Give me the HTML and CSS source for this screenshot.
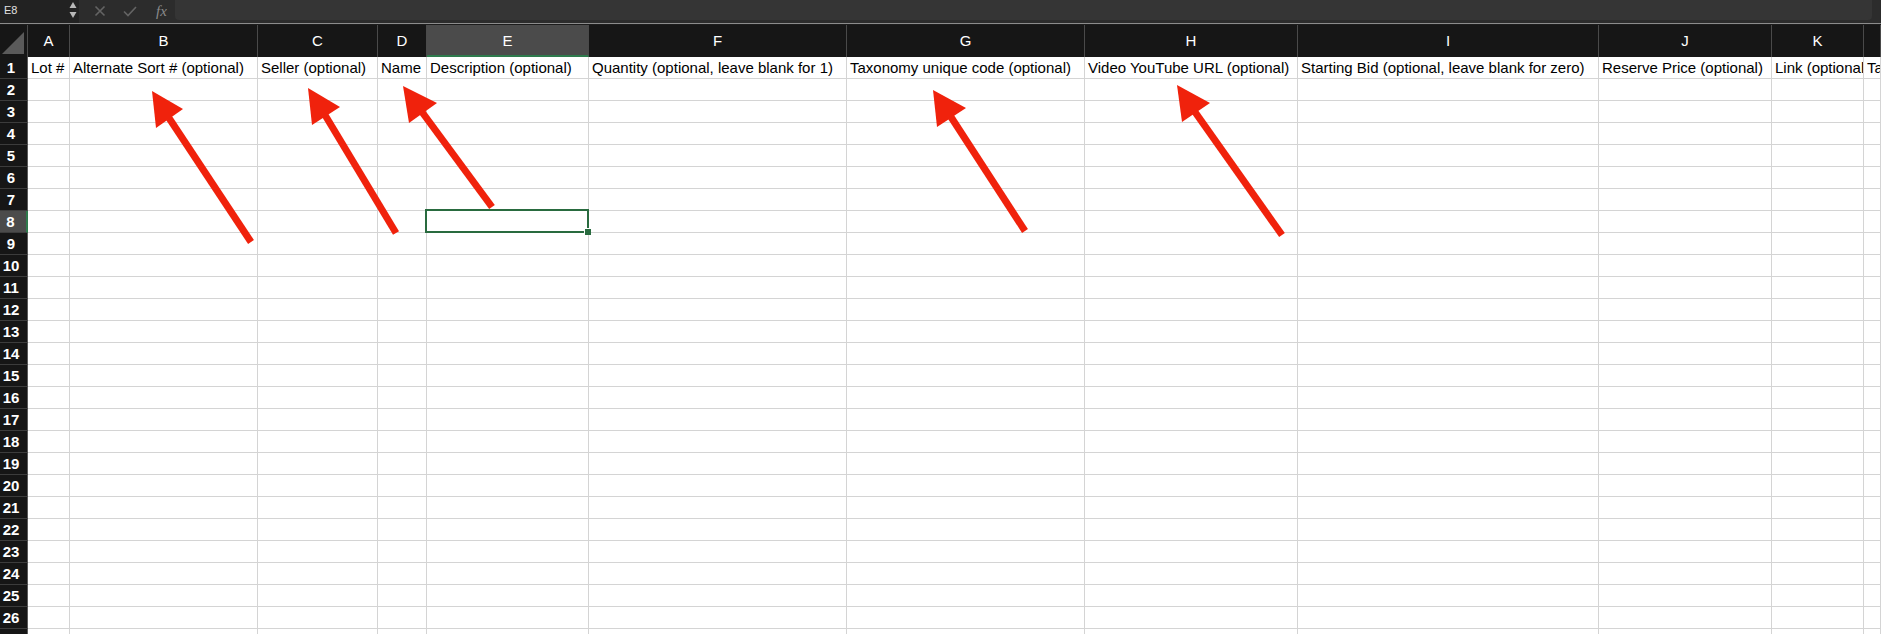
FILE: index.html
```html
<!DOCTYPE html>
<html>
<head>
<meta charset="utf-8">
<link rel="stylesheet" href="styles.css">
</head>
<body>
<div class="topbar">
  <div class="namebox">
    <span class="ref">E8</span>
    <svg class="spin" width="8" height="18" viewBox="0 0 8 18"><polygon points="4,1 7.5,7 0.5,7" fill="#b8b8b8"/><polygon points="0.5,11 7.5,11 4,17" fill="#b8b8b8"/></svg>
  </div>
  <div class="fbtns">
    <svg width="12" height="12" viewBox="0 0 12 12"><path d="M1.5 1.5L10.5 10.5M10.5 1.5L1.5 10.5" stroke="#646464" stroke-width="1.6"/></svg>
    <svg width="14" height="11" viewBox="0 0 14 11"><path d="M1 5.5L5 9.5L13 1" stroke="#646464" stroke-width="1.6" fill="none"/></svg>
    <span class="fx">fx</span>
  </div>
  <div class="finput"></div>
</div>
<div class="topline"></div>
<div class="sheet">
  <div class="row hdr"><div class="corner"><svg width="24" height="24" viewBox="0 0 24 24"><polygon points="23,1 23,23 1,23" fill="#5a5a5a"/></svg></div><div class="h">A</div><div class="h">B</div><div class="h">C</div><div class="h">D</div><div class="h sel">E</div><div class="h">F</div><div class="h">G</div><div class="h">H</div><div class="h">I</div><div class="h">J</div><div class="h">K</div><div class="h"></div></div>
  <div class="row"><div class="rh">1</div><div class="c">Lot #</div><div class="c">Alternate Sort # (optional)</div><div class="c">Seller (optional)</div><div class="c">Name</div><div class="c">Description (optional)</div><div class="c">Quantity (optional, leave blank for 1)</div><div class="c">Taxonomy unique code (optional)</div><div class="c">Video YouTube URL (optional)</div><div class="c">Starting Bid (optional, leave blank for zero)</div><div class="c">Reserve Price (optional)</div><div class="c">Link (optional)</div><div class="c">Tags (optional)</div></div>
  <div class="row"><div class="rh">2</div><div class="c"></div><div class="c"></div><div class="c"></div><div class="c"></div><div class="c"></div><div class="c"></div><div class="c"></div><div class="c"></div><div class="c"></div><div class="c"></div><div class="c"></div><div class="c"></div></div>
  <div class="row"><div class="rh">3</div><div class="c"></div><div class="c"></div><div class="c"></div><div class="c"></div><div class="c"></div><div class="c"></div><div class="c"></div><div class="c"></div><div class="c"></div><div class="c"></div><div class="c"></div><div class="c"></div></div>
  <div class="row"><div class="rh">4</div><div class="c"></div><div class="c"></div><div class="c"></div><div class="c"></div><div class="c"></div><div class="c"></div><div class="c"></div><div class="c"></div><div class="c"></div><div class="c"></div><div class="c"></div><div class="c"></div></div>
  <div class="row"><div class="rh">5</div><div class="c"></div><div class="c"></div><div class="c"></div><div class="c"></div><div class="c"></div><div class="c"></div><div class="c"></div><div class="c"></div><div class="c"></div><div class="c"></div><div class="c"></div><div class="c"></div></div>
  <div class="row"><div class="rh">6</div><div class="c"></div><div class="c"></div><div class="c"></div><div class="c"></div><div class="c"></div><div class="c"></div><div class="c"></div><div class="c"></div><div class="c"></div><div class="c"></div><div class="c"></div><div class="c"></div></div>
  <div class="row"><div class="rh">7</div><div class="c"></div><div class="c"></div><div class="c"></div><div class="c"></div><div class="c"></div><div class="c"></div><div class="c"></div><div class="c"></div><div class="c"></div><div class="c"></div><div class="c"></div><div class="c"></div></div>
  <div class="row"><div class="rh sel">8</div><div class="c"></div><div class="c"></div><div class="c"></div><div class="c"></div><div class="c active"><span class="outline"><span class="handle"></span></span></div><div class="c"></div><div class="c"></div><div class="c"></div><div class="c"></div><div class="c"></div><div class="c"></div><div class="c"></div></div>
  <div class="row"><div class="rh">9</div><div class="c"></div><div class="c"></div><div class="c"></div><div class="c"></div><div class="c"></div><div class="c"></div><div class="c"></div><div class="c"></div><div class="c"></div><div class="c"></div><div class="c"></div><div class="c"></div></div>
  <div class="row"><div class="rh">10</div><div class="c"></div><div class="c"></div><div class="c"></div><div class="c"></div><div class="c"></div><div class="c"></div><div class="c"></div><div class="c"></div><div class="c"></div><div class="c"></div><div class="c"></div><div class="c"></div></div>
  <div class="row"><div class="rh">11</div><div class="c"></div><div class="c"></div><div class="c"></div><div class="c"></div><div class="c"></div><div class="c"></div><div class="c"></div><div class="c"></div><div class="c"></div><div class="c"></div><div class="c"></div><div class="c"></div></div>
  <div class="row"><div class="rh">12</div><div class="c"></div><div class="c"></div><div class="c"></div><div class="c"></div><div class="c"></div><div class="c"></div><div class="c"></div><div class="c"></div><div class="c"></div><div class="c"></div><div class="c"></div><div class="c"></div></div>
  <div class="row"><div class="rh">13</div><div class="c"></div><div class="c"></div><div class="c"></div><div class="c"></div><div class="c"></div><div class="c"></div><div class="c"></div><div class="c"></div><div class="c"></div><div class="c"></div><div class="c"></div><div class="c"></div></div>
  <div class="row"><div class="rh">14</div><div class="c"></div><div class="c"></div><div class="c"></div><div class="c"></div><div class="c"></div><div class="c"></div><div class="c"></div><div class="c"></div><div class="c"></div><div class="c"></div><div class="c"></div><div class="c"></div></div>
  <div class="row"><div class="rh">15</div><div class="c"></div><div class="c"></div><div class="c"></div><div class="c"></div><div class="c"></div><div class="c"></div><div class="c"></div><div class="c"></div><div class="c"></div><div class="c"></div><div class="c"></div><div class="c"></div></div>
  <div class="row"><div class="rh">16</div><div class="c"></div><div class="c"></div><div class="c"></div><div class="c"></div><div class="c"></div><div class="c"></div><div class="c"></div><div class="c"></div><div class="c"></div><div class="c"></div><div class="c"></div><div class="c"></div></div>
  <div class="row"><div class="rh">17</div><div class="c"></div><div class="c"></div><div class="c"></div><div class="c"></div><div class="c"></div><div class="c"></div><div class="c"></div><div class="c"></div><div class="c"></div><div class="c"></div><div class="c"></div><div class="c"></div></div>
  <div class="row"><div class="rh">18</div><div class="c"></div><div class="c"></div><div class="c"></div><div class="c"></div><div class="c"></div><div class="c"></div><div class="c"></div><div class="c"></div><div class="c"></div><div class="c"></div><div class="c"></div><div class="c"></div></div>
  <div class="row"><div class="rh">19</div><div class="c"></div><div class="c"></div><div class="c"></div><div class="c"></div><div class="c"></div><div class="c"></div><div class="c"></div><div class="c"></div><div class="c"></div><div class="c"></div><div class="c"></div><div class="c"></div></div>
  <div class="row"><div class="rh">20</div><div class="c"></div><div class="c"></div><div class="c"></div><div class="c"></div><div class="c"></div><div class="c"></div><div class="c"></div><div class="c"></div><div class="c"></div><div class="c"></div><div class="c"></div><div class="c"></div></div>
  <div class="row"><div class="rh">21</div><div class="c"></div><div class="c"></div><div class="c"></div><div class="c"></div><div class="c"></div><div class="c"></div><div class="c"></div><div class="c"></div><div class="c"></div><div class="c"></div><div class="c"></div><div class="c"></div></div>
  <div class="row"><div class="rh">22</div><div class="c"></div><div class="c"></div><div class="c"></div><div class="c"></div><div class="c"></div><div class="c"></div><div class="c"></div><div class="c"></div><div class="c"></div><div class="c"></div><div class="c"></div><div class="c"></div></div>
  <div class="row"><div class="rh">23</div><div class="c"></div><div class="c"></div><div class="c"></div><div class="c"></div><div class="c"></div><div class="c"></div><div class="c"></div><div class="c"></div><div class="c"></div><div class="c"></div><div class="c"></div><div class="c"></div></div>
  <div class="row"><div class="rh">24</div><div class="c"></div><div class="c"></div><div class="c"></div><div class="c"></div><div class="c"></div><div class="c"></div><div class="c"></div><div class="c"></div><div class="c"></div><div class="c"></div><div class="c"></div><div class="c"></div></div>
  <div class="row"><div class="rh">25</div><div class="c"></div><div class="c"></div><div class="c"></div><div class="c"></div><div class="c"></div><div class="c"></div><div class="c"></div><div class="c"></div><div class="c"></div><div class="c"></div><div class="c"></div><div class="c"></div></div>
  <div class="row"><div class="rh">26</div><div class="c"></div><div class="c"></div><div class="c"></div><div class="c"></div><div class="c"></div><div class="c"></div><div class="c"></div><div class="c"></div><div class="c"></div><div class="c"></div><div class="c"></div><div class="c"></div></div>
  <div class="row"><div class="rh">27</div><div class="c"></div><div class="c"></div><div class="c"></div><div class="c"></div><div class="c"></div><div class="c"></div><div class="c"></div><div class="c"></div><div class="c"></div><div class="c"></div><div class="c"></div><div class="c"></div></div>
</div>
<svg class="arrows" width="1881" height="634" viewBox="0 0 1881 634">
  <g fill="#f0220c" stroke="#f0220c">
    <polygon points="152,91 183,109 156,128" stroke="none"/>
    <line x1="169" y1="118" x2="251" y2="242" stroke-width="7"/>
    <polygon points="308,88 340,107 312,125" stroke="none"/>
    <line x1="325" y1="115" x2="396" y2="233" stroke-width="7"/>
    <polygon points="403,86 437,103 409,123" stroke="none"/>
    <line x1="422" y1="112" x2="492" y2="207" stroke-width="7"/>
    <polygon points="933,90 966,108 937,127" stroke="none"/>
    <line x1="951" y1="117" x2="1025" y2="231" stroke-width="7"/>
    <polygon points="1177,85 1210,103 1182,122" stroke="none"/>
    <line x1="1195" y1="112" x2="1282" y2="235" stroke-width="7"/>
  </g>
</svg>
</body>
</html>
```
FILE: styles.css
```css
html, body {
  margin: 0;
  padding: 0;
}
body {
  width: 1881px;
  height: 634px;
  overflow: hidden;
  background: #ffffff;
  font-family: "Liberation Sans", Arial, sans-serif;
  position: relative;
}
.topbar {
  display: flex;
  height: 23px;
  background: #2c2c2c;
}
.namebox {
  width: 79px;
  background: #222222;
  display: flex;
  align-items: flex-start;
  justify-content: space-between;
  box-sizing: border-box;
  padding: 0 2px 0 4px;
}
.ref {
  color: #e0e0e0;
  font-size: 11px;
  line-height: 20px;
}
.spin {
  margin-top: 1px;
}
.fbtns {
  width: 96px;
  display: flex;
  align-items: center;
  padding-left: 15px;
  box-sizing: border-box;
  gap: 16px;
  height: 22px;
}
.fbtns svg:nth-child(2) {
  margin-left: 1px;
}
.fx {
  font-family: "Liberation Serif", serif;
  font-style: italic;
  font-size: 15px;
  color: #8a8a8a;
  margin-left: 3px;
}
.finput {
  flex: 1;
  height: 20px;
  background: #353535;
  border-radius: 0 0 4px 4px;
  margin-right: 9px;
}
.topline {
  height: 1px;
  background: #8c8c8c;
  border-bottom: 1px solid #1c1c1c;
}
.sheet {
  position: relative;
}
.row {
  display: grid;
  grid-template-columns: 28px 42px 188px 120px 49px 162px 258px 238px 213px 301px 173px 92px minmax(0, 1fr);
  height: 22px;
}
.row.hdr {
  height: 32px;
  background: #161616;
}
.corner {
  display: flex;
  align-items: flex-end;
  justify-content: flex-end;
  border-right: 1px solid #4a4a4a;
  padding: 0 2px 2px 0;
}
.h {
  color: #ffffff;
  font-size: 15px;
  line-height: 31px;
  text-align: center;
  border-right: 1px solid #4a4a4a;
  box-sizing: border-box;
}
.h.sel {
  background: #4b4b4b;
  border-bottom: 2px solid #2e7a4c;
  line-height: 29px;
  padding-top: 1px;
}
.rh {
  background: #161616;
  color: #ffffff;
  font-weight: bold;
  font-size: 15px;
  line-height: 21px;
  text-align: center;
  padding-right: 5px;
  border-bottom: 1px solid #3c3c3c;
  border-right: 1px solid #5a5a5a;
  box-sizing: border-box;
}
.rh.sel {
  background: #4b4b4b;
  border-right: 2px solid #2e7a4c;
}
.c {
  border-right: 1px solid #d4d4d4;
  border-bottom: 1px solid #d4d4d4;
  box-sizing: border-box;
  padding-left: 3px;
  font-size: 15px;
  line-height: 21px;
  color: #000000;
  white-space: nowrap;
  overflow: hidden;
}
.c.active {
  position: relative;
  overflow: visible;
}
.outline {
  position: absolute;
  left: -2px;
  top: -2px;
  width: calc(100% + 3px);
  height: calc(100% + 3px);
  border: 2px solid #296b3f;
  box-sizing: border-box;
  z-index: 2;
}
.handle {
  position: absolute;
  right: -4px;
  bottom: -4px;
  width: 6px;
  height: 6px;
  background: #296b3f;
  border: 1px solid #ffffff;
  border-width: 1px 0 0 1px;
}
.arrows {
  position: absolute;
  left: 0;
  top: 0;
  pointer-events: none;
  z-index: 5;
}
```
